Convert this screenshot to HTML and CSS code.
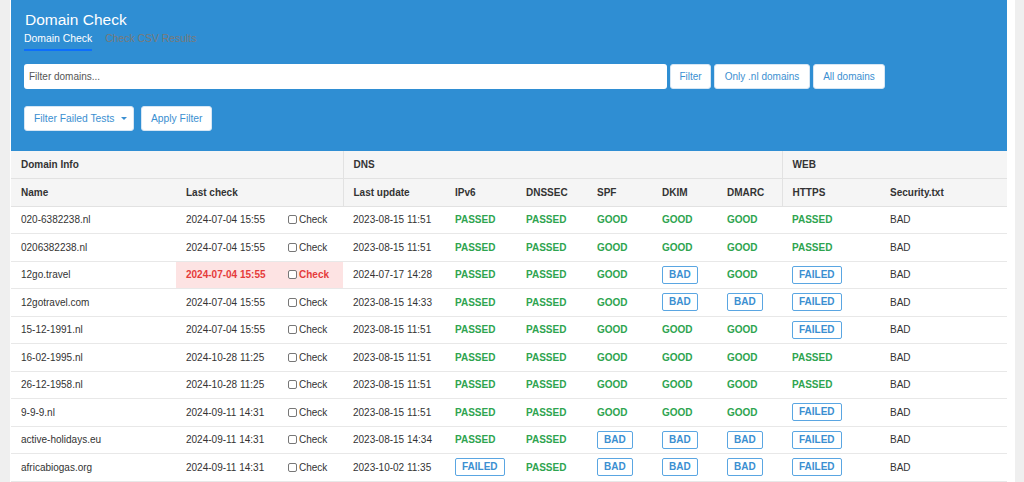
FILE: index.html
```html
<!DOCTYPE html>
<html>
<head>
<meta charset="utf-8">
<link rel="stylesheet" href="styles.css">
</head>
<body>
<div class="page">
  <div class="main">
    <header class="hero">
      <h1 class="title">Domain Check</h1>
      <nav class="tabs">
        <a class="tab active">Domain Check</a>
        <a class="tab">Check CSV Results</a>
      </nav>
      <div class="search-row">
        <div class="input">Filter domains...</div>
        <button class="btn">Filter</button>
        <button class="btn">Only .nl domains</button>
        <button class="btn">All domains</button>
      </div>
      <div class="filter-row">
        <button class="btn btn-lg">Filter Failed Tests<span class="caret"></span></button>
        <button class="btn btn-lg">Apply Filter</button>
      </div>
    </header>
    <table class="grid">
      <colgroup>
        <col style="width:165px"><col style="width:167px"><col style="width:102px"><col style="width:71px"><col style="width:71px"><col style="width:65px"><col style="width:65px"><col style="width:65px"><col style="width:98px"><col style="width:127px">
      </colgroup>
      <thead>
        <tr class="group">
          <th colspan="2">Domain Info</th>
          <th colspan="6" class="sep">DNS</th>
          <th colspan="2" class="sep">WEB</th>
        </tr>
        <tr class="cols">
          <th>Name</th><th>Last check</th><th class="sep">Last update</th><th>IPv6</th><th>DNSSEC</th><th>SPF</th><th>DKIM</th><th>DMARC</th><th class="sep">HTTPS</th><th>Security.txt</th>
        </tr>
      </thead>
      <tbody>
        <tr>
          <td>020-6382238.nl</td>
          <td><div class="lc"><span class="date">2024-07-04 15:55</span><label class="chk"><span class="box"></span>Check</label></div></td>
          <td>2023-08-15 11:51</td>
          <td><span class="ok">PASSED</span></td><td><span class="ok">PASSED</span></td><td><span class="ok">GOOD</span></td><td><span class="ok">GOOD</span></td><td><span class="ok">GOOD</span></td><td><span class="ok">PASSED</span></td><td>BAD</td>
        </tr>
        <tr>
          <td>0206382238.nl</td>
          <td><div class="lc"><span class="date">2024-07-04 15:55</span><label class="chk"><span class="box"></span>Check</label></div></td>
          <td>2023-08-15 11:51</td>
          <td><span class="ok">PASSED</span></td><td><span class="ok">PASSED</span></td><td><span class="ok">GOOD</span></td><td><span class="ok">GOOD</span></td><td><span class="ok">GOOD</span></td><td><span class="ok">PASSED</span></td><td>BAD</td>
        </tr>
        <tr>
          <td>12go.travel</td>
          <td class="stale"><div class="lc"><span class="date">2024-07-04 15:55</span><label class="chk"><span class="box"></span>Check</label></div></td>
          <td>2024-07-17 14:28</td>
          <td><span class="ok">PASSED</span></td><td><span class="ok">PASSED</span></td><td><span class="ok">GOOD</span></td><td><span class="badge">BAD</span></td><td><span class="ok">GOOD</span></td><td><span class="badge">FAILED</span></td><td>BAD</td>
        </tr>
        <tr>
          <td>12gotravel.com</td>
          <td><div class="lc"><span class="date">2024-07-04 15:55</span><label class="chk"><span class="box"></span>Check</label></div></td>
          <td>2023-08-15 14:33</td>
          <td><span class="ok">PASSED</span></td><td><span class="ok">PASSED</span></td><td><span class="ok">GOOD</span></td><td><span class="badge">BAD</span></td><td><span class="badge">BAD</span></td><td><span class="badge">FAILED</span></td><td>BAD</td>
        </tr>
        <tr>
          <td>15-12-1991.nl</td>
          <td><div class="lc"><span class="date">2024-07-04 15:55</span><label class="chk"><span class="box"></span>Check</label></div></td>
          <td>2023-08-15 11:51</td>
          <td><span class="ok">PASSED</span></td><td><span class="ok">PASSED</span></td><td><span class="ok">GOOD</span></td><td><span class="ok">GOOD</span></td><td><span class="ok">GOOD</span></td><td><span class="badge">FAILED</span></td><td>BAD</td>
        </tr>
        <tr>
          <td>16-02-1995.nl</td>
          <td><div class="lc"><span class="date">2024-10-28 11:25</span><label class="chk"><span class="box"></span>Check</label></div></td>
          <td>2023-08-15 11:51</td>
          <td><span class="ok">PASSED</span></td><td><span class="ok">PASSED</span></td><td><span class="ok">GOOD</span></td><td><span class="ok">GOOD</span></td><td><span class="ok">GOOD</span></td><td><span class="ok">PASSED</span></td><td>BAD</td>
        </tr>
        <tr>
          <td>26-12-1958.nl</td>
          <td><div class="lc"><span class="date">2024-10-28 11:25</span><label class="chk"><span class="box"></span>Check</label></div></td>
          <td>2023-08-15 11:51</td>
          <td><span class="ok">PASSED</span></td><td><span class="ok">PASSED</span></td><td><span class="ok">GOOD</span></td><td><span class="ok">GOOD</span></td><td><span class="ok">GOOD</span></td><td><span class="ok">PASSED</span></td><td>BAD</td>
        </tr>
        <tr>
          <td>9-9-9.nl</td>
          <td><div class="lc"><span class="date">2024-09-11 14:31</span><label class="chk"><span class="box"></span>Check</label></div></td>
          <td>2023-08-15 11:51</td>
          <td><span class="ok">PASSED</span></td><td><span class="ok">PASSED</span></td><td><span class="ok">GOOD</span></td><td><span class="ok">GOOD</span></td><td><span class="ok">GOOD</span></td><td><span class="badge">FAILED</span></td><td>BAD</td>
        </tr>
        <tr>
          <td>active-holidays.eu</td>
          <td><div class="lc"><span class="date">2024-09-11 14:31</span><label class="chk"><span class="box"></span>Check</label></div></td>
          <td>2023-08-15 14:34</td>
          <td><span class="ok">PASSED</span></td><td><span class="ok">PASSED</span></td><td><span class="badge">BAD</span></td><td><span class="badge">BAD</span></td><td><span class="badge">BAD</span></td><td><span class="badge">FAILED</span></td><td>BAD</td>
        </tr>
        <tr>
          <td>africabiogas.org</td>
          <td><div class="lc"><span class="date">2024-09-11 14:31</span><label class="chk"><span class="box"></span>Check</label></div></td>
          <td>2023-10-02 11:35</td>
          <td><span class="badge">FAILED</span></td><td><span class="ok">PASSED</span></td><td><span class="badge">BAD</span></td><td><span class="badge">BAD</span></td><td><span class="badge">BAD</span></td><td><span class="badge">FAILED</span></td><td>BAD</td>
        </tr>
      </tbody>
    </table>
  </div>
</div>
</body>
</html>
```

FILE: styles.css
```css
* { box-sizing: border-box; }
html, body { margin: 0; padding: 0; height: 100%; overflow: hidden; }
body {
  font-family: "Liberation Sans", Arial, Helvetica, sans-serif;
  font-size: 10px;
  color: #333;
  background: #fff;
}
.page {
  border-left: 10px solid #efefef;
  border-right: 9px solid #efefef;
  padding-left: 1px;
  padding-right: 8px;
  height: 100%;
}
.main { width: 996px; }

.hero {
  background: #2f8ed3;
  padding: 10px 13px 19px 13px;
  height: 151px;
}
.title {
  margin: 0 0 0 1px;
  font-size: 15.5px;
  line-height: 20px;
  font-weight: normal;
  color: #fff;
}
.tabs {
  display: flex;
  gap: 13px;
  margin-top: 2px;
  height: 22px;
}
.tab {
  font-size: 10.4px;
  line-height: 14px;
  color: #7a7a78;
  padding-bottom: 4px;
  height: 19px;
  display: block;
}
.tab.active {
  color: #fff;
  border-bottom: 2px solid #0d6efd;
}
.search-row {
  display: flex;
  gap: 3px;
  margin-top: 10px;
  height: 25px;
}
.input {
  width: 643px;
  height: 25px;
  background: #fff;
  border-radius: 3px;
  padding-left: 5px;
  line-height: 25px;
  color: #555;
  font-size: 10px;
}
.btn {
  font-family: inherit;
  font-size: 10px;
  color: #3b8fd1;
  background: #fff;
  border: 1px solid #d6e6f4;
  border-radius: 3px;
  height: 25px;
  padding: 0 8px;
  margin: 0;
  line-height: 23px;
  white-space: nowrap;
}
.search-row .btn:nth-of-type(1) { width: 41px; }
.search-row .btn:nth-of-type(2) { width: 96px; }
.search-row .btn:nth-of-type(3) { width: 72px; }
.filter-row {
  display: flex;
  gap: 7px;
  margin-top: 17px;
}
.btn-lg { padding: 0 9px; font-size: 10.3px; }
.filter-row .btn:nth-child(1) { width: 110px; text-align: left; }
.filter-row .btn:nth-child(2) { width: 71px; }
.caret {
  display: inline-block;
  width: 0; height: 0;
  border-left: 3px solid transparent;
  border-right: 3px solid transparent;
  border-top: 3px solid #3b8fd1;
  vertical-align: middle;
  margin-left: 6px;
  margin-top: -2px;
}

.grid {
  width: 996px;
  table-layout: fixed;
  border-collapse: collapse;
}
.grid th {
  text-align: left;
  font-weight: bold;
  background: #f5f5f5;
  color: #333;
  padding: 0 10px;
  height: 27.5px;
  border-bottom: 1px solid #e2e2e2;
}
.grid th.sep { border-left: 1px solid #e2e2e2; }
.grid td {
  padding: 0 10px;
  height: 27.5px;
  border-bottom: 1px solid #e8e8e8;
  white-space: nowrap;
  color: #333;
}
.lc { display: flex; align-items: center; }
.date { width: 102px; }
.chk { display: flex; align-items: center; gap: 2px; }
.box {
  width: 9px; height: 9px;
  border: 1px solid #777;
  border-radius: 2px;
  background: #fff;
  display: inline-block;
}
.stale { background: #fde3e3; }
.stale .date, .stale .chk { color: #e53b3b; font-weight: bold; }
.ok { color: #2ea44f; font-weight: bold; }
.badge {
  display: inline-block;
  color: #3b8fd1;
  font-weight: bold;
  border: 1px solid #5aa6e2;
  border-radius: 2px;
  padding: 0 6px;
  line-height: 16px;
}
```
